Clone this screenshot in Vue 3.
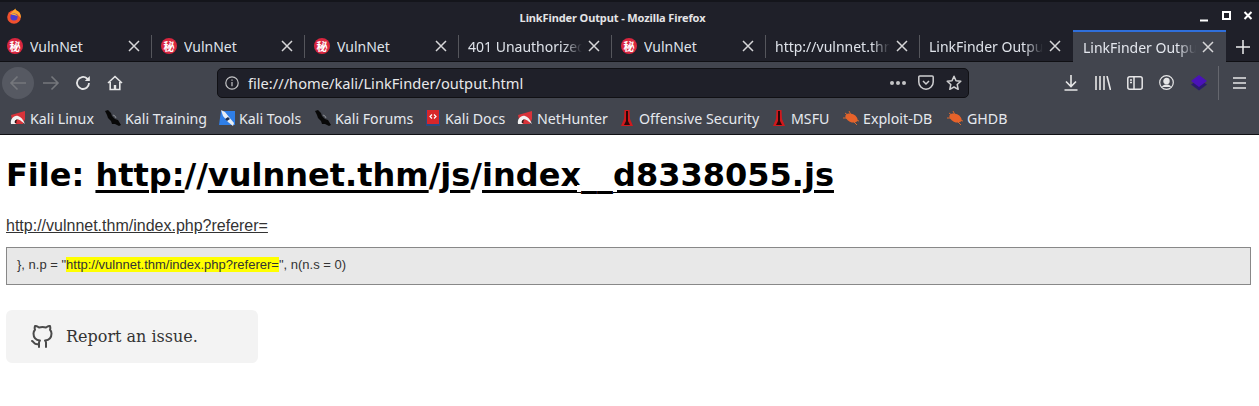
<script setup>
const tabs = [
  { t: 'VulnNet', fav: true, w: 152, first: true },
  { t: 'VulnNet', fav: true, w: 153 },
  { t: 'VulnNet', fav: true, w: 154 },
  { t: '401 Unauthorized', w: 153, fade: true },
  { t: 'VulnNet', fav: true, w: 154 },
  { t: 'http://vulnnet.thm/', w: 154, fade: true },
  { t: 'LinkFinder Output', w: 153, fade: true },
  { t: 'LinkFinder Output', w: 153, fade: true, active: true },
]
const marks = [
  { t: 'Kali Linux', i: 'kali', w: 95 },
  { t: 'Kali Training', i: 'blade', w: 114 },
  { t: 'Kali Tools', i: 'tools', w: 96 },
  { t: 'Kali Forums', i: 'blade', w: 110 },
  { t: 'Kali Docs', i: 'docs', w: 92 },
  { t: 'NetHunter', i: 'kali', w: 102 },
  { t: 'Offensive Security', i: 'off', w: 152 },
  { t: 'MSFU', i: 'off', w: 72 },
  { t: 'Exploit-DB', i: 'bug', w: 104 },
  { t: 'GHDB', i: 'bug', w: 70 },
]
</script>

<template>
  <div class="page">
    <header class="chrome">
      <div class="titlebar">
        <svg class="fx" width="16" height="16" viewBox="0 0 16 16">
          <circle cx="8" cy="9" r="6.800" fill="#f0502e" />
          <path d="M2 5c1 .5 2 .5 3 0C6.500 3 8 2 9.500 .5c0 2 2 2 3.500 3.500 1.500 1.500 2 3.500 1.800 6L11 6 5 6z" fill="#ffa42c" />
          <circle cx="8" cy="9" r="3.600" fill="#4a3dd0" />
          <path d="M5 6.500c2-1.500 5-1 6.500 1.500L8 7z" fill="#ffb32c" />
        </svg>
        <span class="wintitle">LinkFinder Output - Mozilla Firefox</span>
        <div class="winbtns">
          <svg width="70" height="14" viewBox="0 0 70 14" fill="none" stroke="#fff" stroke-width="2">
            <path d="M1 11.500h8" />
            <rect x="24" y="3" width="7" height="7" />
            <path d="M45.500 3l7 7M52.500 3l-7 7" />
          </svg>
        </div>
      </div>
      <div class="tabstrip">
        <div
          v-for="(tab, n) in tabs"
          :key="n"
          class="tab"
          :class="{ active: tab.active, sep: !tab.active && n < 6, first: tab.first }"
          :style="{ width: tab.w + 'px' }"
        >
          <span v-if="tab.fav" class="fav">秘</span>
          <span class="tabtext" :class="{ fade: tab.fade }">{{ tab.t }}</span>
          <svg class="x" width="12" height="12" viewBox="0 0 12 12" stroke="#d6d6d8" stroke-width="1.500" fill="none">
            <path d="M1 1l10 10M11 1L1 11" />
          </svg>
        </div>
        <svg class="plus" width="14" height="14" viewBox="0 0 14 14" stroke="#ededee" stroke-width="1.500" fill="none">
          <path d="M7 0v14M0 7h14" />
        </svg>
      </div>
      <div class="navbar">
        <div class="back">
          <svg width="18" height="16" viewBox="0 0 18 16" fill="none" stroke="#75777c" stroke-width="1.600">
            <path d="M17 8H2M8.500 1.500L2 8l6.500 6.500" />
          </svg>
        </div>
        <svg class="nb fwd" width="18" height="16" viewBox="0 0 18 16" fill="none" stroke="#75777c" stroke-width="1.600">
          <path d="M1 8h15M9.500 1.500L16 8l-6.500 6.500" />
        </svg>
        <svg class="nb rel" width="16" height="16" viewBox="0 0 16 16" fill="none" stroke="#e6e6e7" stroke-width="1.800">
          <path d="M14 8a6 6 0 1 1-2-4.500L14 5" />
          <path d="M14.800 1v5h-5z" fill="#e6e6e7" stroke="none" />
        </svg>
        <svg class="nb home" width="16" height="16" viewBox="0 0 16 16" fill="none" stroke="#e6e6e7" stroke-width="1.600">
          <path d="M1 8l7-6.500L15 8M3.200 7v7.500h9.600V7" />
          <rect x="6.800" y="10" width="2.400" height="4.500" fill="#e6e6e7" stroke="none" />
        </svg>
        <div class="urlbar">
          <svg width="14" height="14" viewBox="0 0 14 14" fill="none" stroke="#c4c4c6" stroke-width="1.200">
            <circle cx="7" cy="7" r="6.200" />
            <path d="M7 6v4.200M7 3.400v1.300" />
          </svg>
          <span class="url">file:///home/kali/LinkFinder/output.html</span>
          <span class="dots"><i></i><i></i><i></i></span>
          <svg class="pocket" width="16" height="15" viewBox="0 0 16 15" fill="none" stroke="#cfcfd1" stroke-width="1.500">
            <path d="M1.800 1h12.400a1 1 0 0 1 1 1v5a7.200 7.200 0 0 1-14.400 0V2a1 1 0 0 1 1-1z" />
            <path d="M5 6l3 3 3-3" />
          </svg>
          <svg class="star" width="16" height="16" viewBox="0 0 16 16" fill="none" stroke="#cfcfd1" stroke-width="1.500" stroke-linejoin="round">
            <path d="M8 1.300l2 4.500 4.800.5-3.600 3.200 1 4.800L8 12l-4.200 2.300 1-4.800L1.200 6.300 6 5.800z" />
          </svg>
        </div>
        <div class="tools">
          <svg width="14" height="16" viewBox="0 0 14 16" fill="none" stroke="#e6e6e7" stroke-width="1.600">
            <path d="M7 0v11M2 6.500L7 11.500 12 6.500M0.500 15h13" />
          </svg>
          <svg class="lib" width="16" height="14" viewBox="0 0 16 14" fill="none" stroke="#e6e6e7" stroke-width="1.600">
            <path d="M1 0v14M5 0v14M9 0v14M12 0l3.500 14" />
          </svg>
          <svg class="side" width="16" height="14" viewBox="0 0 16 14" fill="none" stroke="#e6e6e7" stroke-width="1.500">
            <rect x=".8" y=".8" width="14.400" height="12.400" rx="2" />
            <path d="M7 1v12M3 4h2M3 6.500h2" />
          </svg>
          <svg class="acct" width="15" height="15" viewBox="0 0 15 15" fill="none" stroke="#e6e6e7" stroke-width="1.200">
            <circle cx="7.500" cy="7.500" r="6.800" />
            <circle cx="7.500" cy="6" r="2.600" fill="#e6e6e7" />
            <path d="M2.800 12c1-2 3-2.500 4.700-2.500s3.700.5 4.700 2.500" fill="#e6e6e7" stroke="none" />
          </svg>
          <svg class="ext" width="16" height="16" viewBox="0 0 16 16">
            <path d="M8 4.500L16 9.500 8 15.500 0 9.500z" fill="#2b1a6e" />
            <path d="M8 0l8 6-8 6-8-6z" fill="#4a12b8" />
          </svg>
          <span class="divider"></span>
          <svg class="menu" width="13" height="12" viewBox="0 0 13 12" stroke="#e6e6e7" stroke-width="1.700">
            <path d="M0 1h13M0 6h13M0 11h13" />
          </svg>
        </div>
      </div>
      <div class="bookmarks">
        <div v-for="m in marks" :key="m.t" class="mark" :style="{ width: m.w + 'px' }">
          <svg v-if="m.i === 'kali'" width="16" height="16" viewBox="0 0 16 16">
            <path d="M1 5l14-4v8l-2 5H3z" fill="#d8333a" />
            <path d="M1 14C0 9 4 5 8 6c3 .8 5 3.500 7 8l-4-3c-2-2-5-2-6 0-.5 1 0 2 1 3z" fill="#f2f2f2" />
            <path d="M5 13c-1-2 1-4 3-3.500-1.500.5-2 2-1.500 3.500z" fill="#2a1a1a" />
          </svg>
          <svg v-else-if="m.i === 'blade'" width="16" height="16" viewBox="0 0 16 16">
            <path d="M0 1l3-1 3 3 1 3 3 3 3 1 3 5-2 1-4-2-3 0-1-3-3-3-1-3z" fill="#080808" />
            <path d="M8 5l2 1 1 2" stroke="#8a8d92" stroke-width="1" fill="none" />
          </svg>
          <svg v-else-if="m.i === 'tools'" width="16" height="16" viewBox="0 0 16 16">
            <path d="M2 1h14v14H0z" fill="#2f7fe8" />
            <path d="M2 0l4 2 4 5 5 6-1 3-5-4-5-6z" fill="#e8eef5" />
            <path d="M6 9l3-2 2 2-3 2z" fill="#1b2f55" />
          </svg>
          <svg v-else-if="m.i === 'docs'" width="16" height="16" viewBox="0 0 16 16">
            <rect x="1" y="0" width="14" height="16" fill="#2a4a80" />
            <rect x="2" y="0" width="12" height="14" fill="#d7262b" />
            <path d="M7 4.500L5 6.500l2 2M9 4.500l2 2-2 2" fill="none" stroke="#fff" stroke-width="1.200" />
          </svg>
          <svg v-else-if="m.i === 'off'" width="16" height="18" viewBox="0 0 16 18">
            <path d="M2 17L5 10 5.500 1h5l.5 9 3 7z" fill="#d0181c" />
            <path d="M7 2h2v10l2 4H5l2-4z" fill="#2a0808" />
          </svg>
          <svg v-else width="16" height="14" viewBox="0 0 16 14">
            <ellipse cx="8.500" cy="7" rx="6.500" ry="4" transform="rotate(25 8.500 7)" fill="#e8622a" />
            <path d="M0 7h5M2 2l4 3M6 0l2 4M14 14l-4-4M16 10l-4-1" stroke="#d9682f" stroke-width="1" fill="none" />
          </svg>
          <span>{{ m.t }}</span>
        </div>
      </div>
    </header>

    <main class="content">
      <h1>File: <a href="#"><span class="u">http:</span>//<span class="u">vulnnet.thm</span>/<span class="u">js</span>/<span class="u">index</span><span class="us">__</span><span class="u">d8338055.js</span></a></h1>
      <a class="found" href="#">http://vulnnet.thm/index.php?referer=</a>
      <div class="snippet">}, n.p = "<mark>http://vulnnet.thm/index.php?referer=</mark>", n(n.s = 0)</div>
      <a class="report" href="#">
        <svg width="24" height="24" viewBox="0 0 24 24" fill="none" stroke="#4a4a4a" stroke-width="2" stroke-linecap="round" stroke-linejoin="round">
          <path d="M9 19c-5 1.500-5-2.500-7-3m14 6v-3.870a3.370 3.370 0 0 0-.94-2.610c3.140-.35 6.440-1.540 6.440-7A5.440 5.440 0 0 0 20 4.770 5.070 5.070 0 0 0 19.910 1S18.730.65 16 2.480a13.380 13.380 0 0 0-7 0C6.270.65 5.090 1 5.090 1A5.070 5.070 0 0 0 5 4.770a5.440 5.440 0 0 0-1.500 3.780c0 5.420 3.300 6.610 6.440 7A3.370 3.370 0 0 0 9 18.130V22" />
        </svg>
        <span>Report an issue.</span>
      </a>
    </main>
  </div>
</template>

<style scoped>
.page { width: 1259px; height: 406px; overflow: hidden; background: #fff; }
.chrome { height: 135px; background: #1f2029; color: #e8e8ea; font-family: "Noto Sans", sans-serif; border-bottom: 1px solid #101014; box-sizing: border-box; display: flex; flex-direction: column; }
.titlebar { height: 30px; flex: none; position: relative; display: flex; align-items: center; justify-content: center; border-top: 2px solid #14151b; box-sizing: border-box; }
.fx { position: absolute; left: 6px; top: 6px; }
.wintitle { font-size: 11px; letter-spacing: -.11px; font-weight: 700; color: #e4e4e6; margin: 2px 34px 0 0; }
.winbtns { position: absolute; left: 1199px; top: 7px; display: flex; }
.tabstrip { height: 32px; flex: none; display: flex; align-items: stretch; border-bottom: 1px solid #101014; box-sizing: border-box; }
.tab { flex: none; display: flex; align-items: center; padding: 0 8px 0 9px; box-sizing: border-box; font-size: 14px; color: #dfe3ea; position: relative; margin-top: 1px; }
.tab.first { padding-left: 7px; }
.tab.sep::after { content: ""; position: absolute; right: 0; top: 4px; bottom: 3px; width: 1px; background: #55565c; }
.tab.active { background: #42454e; border-top: 2px solid #2f6fdb; margin-top: 0; margin-bottom: -1px; padding-left: 10px; color: #e4e7ee; }
.fav { width: 16px; height: 16px; flex: none; border-radius: 50%; background: #d9263f; color: #fff; font: 700 11px/16px "Noto Sans CJK JP", sans-serif; text-align: center; margin-right: 7px; }
.tabtext { flex: 1; min-width: 0; overflow: hidden; white-space: nowrap; }
.tabtext.fade { -webkit-mask-image: linear-gradient(to right, #000 84%, transparent 100%); mask-image: linear-gradient(to right, #000 84%, transparent 100%); }
.x { flex: none; margin-left: 6px; margin-right: 4px; }
.plus { margin: 10px 0 0 10px; }
.navbar { height: 41px; flex: none; background: #42454e; display: flex; align-items: center; padding-left: 2px; }
.back { width: 32px; height: 32px; border-radius: 50%; background: #565962; display: flex; align-items: center; justify-content: center; flex: none; }
.nb { flex: none; }
.fwd { margin-left: 8px; }
.rel { margin-left: 15px; }
.home { margin-left: 16px; }
.urlbar { width: 752px; height: 30px; flex: none; margin-left: 94px; position: relative; box-sizing: border-box; background: #1f2029; border: 1px solid #101014; border-radius: 5px; display: flex; align-items: center; padding-left: 7px; }
.url { font-size: 14.650px; margin-left: 9px; flex: 1; color: #e8e8ea; }
.dots { display: flex; gap: 2px; margin-right: 12px; }
.dots i { width: 4px; height: 4px; border-radius: 50%; background: #c4c4c6; }
.pocket { margin-right: 12px; }
.star { margin-right: 6px; }
.tools { display: flex; align-items: center; margin-left: 95px; }
.lib { margin-left: 17px; }
.side { margin-left: 16px; }
.acct { margin-left: 16px; }
.ext { margin-left: 17px; }
.divider { width: 1px; height: 34px; background: #65676e; margin-left: 11px; }
.menu { margin-left: 14px; }
.bookmarks { flex: 1; background: #42454e; display: flex; align-items: center; padding: 0 0 1px 10px; }
.mark { flex: none; display: flex; align-items: center; gap: 4px; font-size: 14.200px; color: #e6e9ee; white-space: nowrap; }
.content { padding: 0 6px; color: #333; }
h1 { margin: 20px 0 0; font: 700 32px/40px "DejaVu Sans", sans-serif; color: #000; }
h1 a { color: #000; text-decoration: none; }
.u { text-decoration: underline; text-decoration-thickness: 3px; text-underline-offset: 4px; text-decoration-skip-ink: all; }
.us { position: relative; }
.us::before, .us::after { content: ""; position: absolute; bottom: 0; width: 4px; height: 12px; background: #fff; z-index: 0; }
.us::before { left: -4px; height: 7px; bottom: 2px; }
.us::after { right: -4px; height: 7px; bottom: 2px; }
.found { display: block; margin-top: 20px; font: 16px/22px "Liberation Sans", sans-serif; color: #333; text-decoration: underline; }
.snippet { margin: 10px 2px 0 0; height: 38px; box-sizing: border-box; background: #e8e8e8; border: 1px solid #888; padding: 0 10px; font: 13px/34px "Liberation Sans", sans-serif; color: #333; }
mark { background: #ff0; color: #333; }
.report { margin-top: 25px; width: 252px; height: 53px; box-sizing: border-box; background: #f3f3f3; border-radius: 6px; display: flex; align-items: center; padding-left: 24px; gap: 12px; font: 16px "DejaVu Serif", serif; color: #333; text-decoration: none; }
</style>
